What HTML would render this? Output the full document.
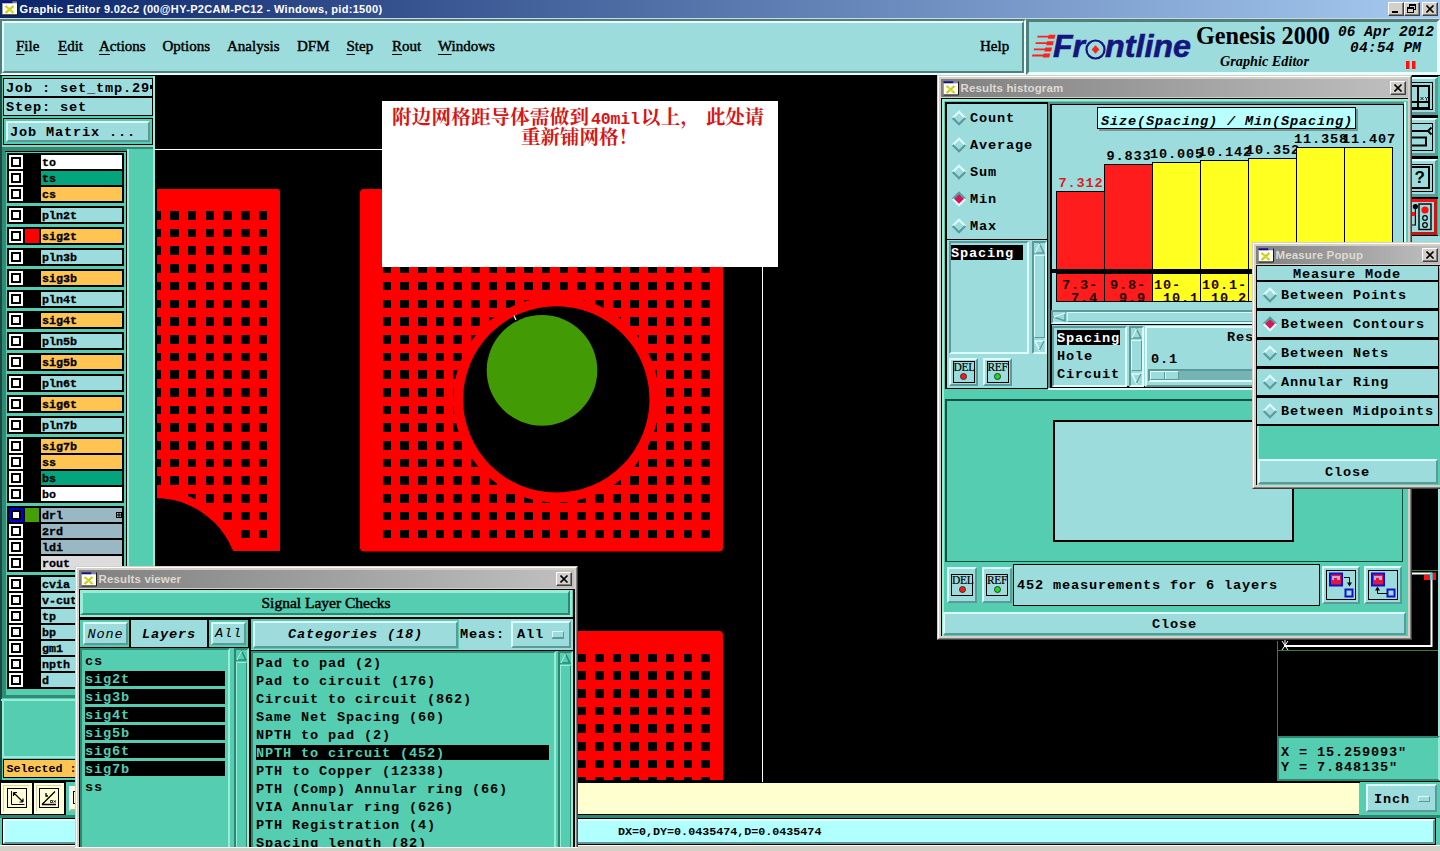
<!DOCTYPE html>
<html><head><meta charset="utf-8"><title>Graphic Editor</title>
<style>
html,body{margin:0;padding:0;width:1440px;height:851px;overflow:hidden}
body{width:1440px;height:851px;overflow:hidden;position:relative;background:#55cdb0}
div,span,svg{position:absolute;box-sizing:border-box}
span{white-space:pre;color:#000;line-height:20px;height:20px}
.m{font:bold 13.6px/20px "Liberation Mono",monospace;letter-spacing:0.84px}
.mi{font:italic bold 13.6px/20px "Liberation Mono",monospace;letter-spacing:0.84px}
.mn{font:italic 13.6px/20px "Liberation Mono",monospace;letter-spacing:0.84px}
.s{font:15px/20px "Liberation Serif",serif;-webkit-text-stroke:0.45px #000}
.sb{font:bold 15px/20px "Liberation Serif",serif;letter-spacing:0.5px}
.t{font:bold 11px/20px "Liberation Sans",sans-serif}
u{text-underline-offset:2.5px;text-decoration-thickness:1px}
.lc{background:#9ddcdc}
.aq{background:#55cdb0}
.ro{border:2px solid;border-color:#dcfbfb #5c9a9a #5c9a9a #dcfbfb;background:#9ddcdc}
.ri{border:2px solid;border-color:#5c9a9a #dcfbfb #dcfbfb #5c9a9a;background:#9ddcdc}
.ao{border:2px solid;border-color:#98ecd8 #2c8670 #2c8670 #98ecd8;background:#55cdb0}
.ai{border:2px solid;border-color:#2c8670 #98ecd8 #98ecd8 #2c8670;background:#55cdb0}
.bk{border:1px solid #000}
.cb{width:14px;height:14px;background:#fff;border:2px solid #fff}
.cb i{position:absolute;left:0;top:0;width:10px;height:10px;border:2px solid #000;background:#fff;box-sizing:border-box}
.win{background:#d4d0c8;border:1px solid;border-color:#d4d0c8 #404040 #404040 #d4d0c8}
.win>.w2{left:0;top:0;right:0;bottom:0;border:1px solid;border-color:#fff #808080 #808080 #fff}
.tb{background:linear-gradient(90deg,#808080,#c0c0c0);height:18px}
.xb{width:16px;height:14px;background:#d4d0c8;border:1px solid;border-color:#fff #404040 #404040 #fff;box-shadow:inset -1px -1px 0 #808080}
</style></head>
<body>
<div id="r" style="left:0;top:0;width:1440px;height:851px;overflow:hidden">
<div style="left:0px;top:0px;width:1440px;height:18px;background:linear-gradient(90deg,#0a246a,#a6caf0)"></div>
<div style="left:0px;top:18px;width:1440px;height:1px;background:#d0d6de"></div>
<svg style="left:2px;top:0px" width="17" height="16" viewBox="0 0 17 16"><rect x="1" y="3" width="14" height="11.500" fill="#fffff4"/><rect x="0.500" y="1.300" width="10" height="2" fill="#10108a"/><rect x="10.500" y="1.300" width="4.500" height="2" fill="#7880a8"/><path d="M15.500 1.500V15H0.500" stroke="#181818" fill="none"/><path d="M0.500 3V14.500" stroke="#a0a0a0" fill="none"/><path d="M3.500 6L11.500 13M11.500 6L3.500 13" stroke="#c8cc18" stroke-width="2.200"/><path d="M4.500 7.500L10 12" stroke="#eef040" stroke-width="0.800"/></svg>
<span class="t" style="left:19.5px;top:-1.03px;color:#fff;letter-spacing:0.33px">Graphic Editor 9.02c2 (00@HY-P2CAM-PC12 - Windows, pid:1500)</span>
<div class="xb" style="left:1388px;top:2px;width:16px;height:14px;"><div style="left:3px;top:8px;width:6px;height:2px;background:#000"></div></div>
<div class="xb" style="left:1404px;top:2px;width:16px;height:14px;"><div style="left:4px;top:1px;width:7px;height:6px;border:1px solid #000;border-top-width:2px"></div><div style="left:2px;top:4px;width:7px;height:6px;border:1px solid #000;border-top-width:2px;background:#d4d0c8"></div></div>
<div class="xb" style="left:1422px;top:2px;width:16px;height:14px;"><svg style="left:3px;top:2px" width="9" height="8"><path d="M0.5 0.5L7.5 7.5M7.5 0.5L0.5 7.5" stroke="#000" stroke-width="1.6"/></svg></div>
<div style="left:0px;top:19px;width:1026px;height:56px;border:2px solid;border-color:#4f807c #e8fffd #e8fffd #4f807c;background:#9ddcdc"><div style="left:0;top:0;right:0;bottom:0;border:2px solid;border-color:#e8fffd #4f807c #4f807c #e8fffd"></div></div>
<span class="s" style="left:16px;top:35.85px;"><u>F</u>ile</span>
<span class="s" style="left:58px;top:35.85px;"><u>E</u>dit</span>
<span class="s" style="left:99px;top:35.85px;"><u>A</u>ctions</span>
<span class="s" style="left:162.5px;top:35.85px;">Options</span>
<span class="s" style="left:227px;top:35.85px;">Analysis</span>
<span class="s" style="left:297px;top:35.85px;">DFM</span>
<span class="s" style="left:346.5px;top:35.85px;"><u>S</u>tep</span>
<span class="s" style="left:392px;top:35.85px;"><u>R</u>out</span>
<span class="s" style="left:438px;top:35.85px;"><u>W</u>indows</span>
<span class="s" style="left:980px;top:35.85px;">Help</span>
<div style="left:1026px;top:19px;width:414px;height:56px;border:3px solid;border-color:#4f807c #e8fffd #e8fffd #4f807c;background:#9ddcdc"></div>
<svg style="left:1026px;top:17px" width="414" height="58" viewBox="1026 17 414 58">
<g fill="#ff2020"><path d="M1037.500 35.800h11l.4-1h6.600l-1 4h-6.600l.3-1.200h-11z"/><path d="M1035.800 42.200h11l.4-1h6.600l-1 4h-6.600l.3-1.200h-11z"/><path d="M1034 48.400h11l.4-1h6.600l-1 4h-6.600l.3-1.200h-11z"/><path d="M1032.300 54.600h11l.4-1h6.600l-1 4h-6.600l.3-1.200h-11z"/></g>
<g font-family="Liberation Sans" font-weight="bold" font-style="italic" font-size="31" fill="#15157f" stroke="#15157f" stroke-width="0.6">
<text x="1053" y="57" textLength="32" lengthAdjust="spacingAndGlyphs">Fr</text>
<text x="1105" y="57" textLength="86" lengthAdjust="spacingAndGlyphs">ntline</text></g>
<circle cx="1095.5" cy="49.5" r="9" fill="none" stroke="#15157f" stroke-width="2.2"/>
<path d="M1095.5 45.2l3.8 4.3-3.8 4.3-3.8-4.3z" fill="#ff2020"/>
<text x="1196" y="44" font-family="Liberation Serif" font-size="26" font-weight="bold" textLength="134" lengthAdjust="spacingAndGlyphs" fill="#000">Genesis 2000</text>
<text x="1220" y="66" font-family="Liberation Serif" font-weight="bold" font-style="italic" font-size="14" textLength="89" lengthAdjust="spacingAndGlyphs" fill="#000">Graphic Editor</text>
<g font-family="Liberation Mono" font-weight="bold" font-style="italic" font-size="14.5" fill="#000">
<text x="1338" y="36" textLength="96" lengthAdjust="spacing">06 Apr 2012</text>
<text x="1350" y="52" textLength="71" lengthAdjust="spacing">04:54 PM</text></g>
<rect x="1406" y="61" width="3.5" height="8" fill="#ff1010"/><rect x="1412" y="61" width="3.5" height="8" fill="#ff1010"/>
</svg>
<div style="left:0px;top:75px;width:1440px;height:1px;background:#000"></div>
<div style="left:0px;top:76px;width:155px;height:706px;background:#55cdb0;border-left:2px solid #1c4a40"></div>
<div style="left:3px;top:78px;width:150px;height:19px;border:1px solid #000;background:#9ddcdc"></div>
<div style="left:3px;top:96px;width:150px;height:20px;border:1px solid #000;border-top-width:2px;background:#9ddcdc"></div>
<span class="m" style="left:6px;top:79.16px;">Job : set_tmp.29</span>
<div style="left:150px;top:85px;width:2px;height:4px;background:#000"></div>
<span class="m" style="left:6px;top:98.16px;">Step: set</span>
<div style="left:3px;top:118px;width:150px;height:27px;border:1px solid #000;background:#55cdb0"></div>
<div class="ro" style="left:6px;top:121px;width:144px;height:21px;"></div>
<span class="m" style="left:10px;top:123.16px;">Job Matrix ...</span>
<div style="left:2px;top:145px;width:151px;height:2px;background:#84d8c6"></div>
<div style="left:2px;top:147px;width:151px;height:4px;background:#2f8b76"></div>
<div style="left:2px;top:151px;width:125px;height:547px;background:#55cdb0;border:solid #2f8b76;border-width:0 0 3px 4px"></div>
<div style="left:5px;top:151px;width:122px;height:1px;background:#000"></div>
<div style="left:126px;top:151px;width:1px;height:547px;background:#000"></div>
<div style="left:127px;top:149px;width:28px;height:633px;background:#55cdb0;border:solid #98ecd8;border-width:0 2px 0 2px"></div>
<div style="left:153px;top:76px;width:2px;height:706px;background:#98ecd8"></div>
<div style="left:7px;top:153px;width:117px;height:50px;background:#000"></div>
<div class="cb" style="left:9px;top:155px;width:14px;height:14px;background:#fff;border-color:#fff"><i></i></div>
<div style="left:41px;top:155px;width:81px;height:14px;background:#fff"></div>
<span class="m" style="left:42px;top:152.74px;font-size:11.7px;letter-spacing:0;-webkit-text-stroke:0.3px #000">to</span>
<div class="cb" style="left:9px;top:171px;width:14px;height:14px;background:#fff;border-color:#fff"><i></i></div>
<div style="left:41px;top:171px;width:81px;height:14px;background:#04a47c"></div>
<span class="m" style="left:42px;top:168.74px;font-size:11.7px;letter-spacing:0;-webkit-text-stroke:0.3px #000">ts</span>
<div class="cb" style="left:9px;top:187px;width:14px;height:14px;background:#fff;border-color:#fff"><i></i></div>
<div style="left:41px;top:187px;width:81px;height:14px;background:#ffc452"></div>
<span class="m" style="left:42px;top:184.74px;font-size:11.7px;letter-spacing:0;-webkit-text-stroke:0.3px #000">cs</span>
<div style="left:7px;top:206px;width:117px;height:18px;background:#000"></div>
<div class="cb" style="left:9px;top:208px;width:14px;height:14px;background:#fff;border-color:#fff"><i></i></div>
<div style="left:41px;top:208px;width:81px;height:14px;background:#9ddcdc"></div>
<span class="m" style="left:42px;top:205.74px;font-size:11.7px;letter-spacing:0;-webkit-text-stroke:0.3px #000">pln2t</span>
<div style="left:7px;top:227px;width:117px;height:18px;background:#000"></div>
<div class="cb" style="left:9px;top:229px;width:14px;height:14px;background:#fff;border-color:#fff"><i></i></div>
<div style="left:25px;top:229px;width:14px;height:14px;background:#ff0000"></div>
<div style="left:41px;top:229px;width:81px;height:14px;background:#ffc452"></div>
<span class="m" style="left:42px;top:226.74px;font-size:11.7px;letter-spacing:0;-webkit-text-stroke:0.3px #000">sig2t</span>
<div style="left:7px;top:248px;width:117px;height:18px;background:#000"></div>
<div class="cb" style="left:9px;top:250px;width:14px;height:14px;background:#fff;border-color:#fff"><i></i></div>
<div style="left:41px;top:250px;width:81px;height:14px;background:#9ddcdc"></div>
<span class="m" style="left:42px;top:247.74px;font-size:11.7px;letter-spacing:0;-webkit-text-stroke:0.3px #000">pln3b</span>
<div style="left:7px;top:269px;width:117px;height:18px;background:#000"></div>
<div class="cb" style="left:9px;top:271px;width:14px;height:14px;background:#fff;border-color:#fff"><i></i></div>
<div style="left:41px;top:271px;width:81px;height:14px;background:#ffc452"></div>
<span class="m" style="left:42px;top:268.74px;font-size:11.7px;letter-spacing:0;-webkit-text-stroke:0.3px #000">sig3b</span>
<div style="left:7px;top:290px;width:117px;height:18px;background:#000"></div>
<div class="cb" style="left:9px;top:292px;width:14px;height:14px;background:#fff;border-color:#fff"><i></i></div>
<div style="left:41px;top:292px;width:81px;height:14px;background:#9ddcdc"></div>
<span class="m" style="left:42px;top:289.74px;font-size:11.7px;letter-spacing:0;-webkit-text-stroke:0.3px #000">pln4t</span>
<div style="left:7px;top:311px;width:117px;height:18px;background:#000"></div>
<div class="cb" style="left:9px;top:313px;width:14px;height:14px;background:#fff;border-color:#fff"><i></i></div>
<div style="left:41px;top:313px;width:81px;height:14px;background:#ffc452"></div>
<span class="m" style="left:42px;top:310.74px;font-size:11.7px;letter-spacing:0;-webkit-text-stroke:0.3px #000">sig4t</span>
<div style="left:7px;top:332px;width:117px;height:18px;background:#000"></div>
<div class="cb" style="left:9px;top:334px;width:14px;height:14px;background:#fff;border-color:#fff"><i></i></div>
<div style="left:41px;top:334px;width:81px;height:14px;background:#9ddcdc"></div>
<span class="m" style="left:42px;top:331.74px;font-size:11.7px;letter-spacing:0;-webkit-text-stroke:0.3px #000">pln5b</span>
<div style="left:7px;top:353px;width:117px;height:18px;background:#000"></div>
<div class="cb" style="left:9px;top:355px;width:14px;height:14px;background:#fff;border-color:#fff"><i></i></div>
<div style="left:41px;top:355px;width:81px;height:14px;background:#ffc452"></div>
<span class="m" style="left:42px;top:352.74px;font-size:11.7px;letter-spacing:0;-webkit-text-stroke:0.3px #000">sig5b</span>
<div style="left:7px;top:374px;width:117px;height:18px;background:#000"></div>
<div class="cb" style="left:9px;top:376px;width:14px;height:14px;background:#fff;border-color:#fff"><i></i></div>
<div style="left:41px;top:376px;width:81px;height:14px;background:#9ddcdc"></div>
<span class="m" style="left:42px;top:373.74px;font-size:11.7px;letter-spacing:0;-webkit-text-stroke:0.3px #000">pln6t</span>
<div style="left:7px;top:395px;width:117px;height:18px;background:#000"></div>
<div class="cb" style="left:9px;top:397px;width:14px;height:14px;background:#fff;border-color:#fff"><i></i></div>
<div style="left:41px;top:397px;width:81px;height:14px;background:#ffc452"></div>
<span class="m" style="left:42px;top:394.74px;font-size:11.7px;letter-spacing:0;-webkit-text-stroke:0.3px #000">sig6t</span>
<div style="left:7px;top:416px;width:117px;height:18px;background:#000"></div>
<div class="cb" style="left:9px;top:418px;width:14px;height:14px;background:#fff;border-color:#fff"><i></i></div>
<div style="left:41px;top:418px;width:81px;height:14px;background:#9ddcdc"></div>
<span class="m" style="left:42px;top:415.74px;font-size:11.7px;letter-spacing:0;-webkit-text-stroke:0.3px #000">pln7b</span>
<div style="left:7px;top:437px;width:117px;height:66px;background:#000"></div>
<div class="cb" style="left:9px;top:439px;width:14px;height:14px;background:#fff;border-color:#fff"><i></i></div>
<div style="left:41px;top:439px;width:81px;height:14px;background:#ffc452"></div>
<span class="m" style="left:42px;top:436.74px;font-size:11.7px;letter-spacing:0;-webkit-text-stroke:0.3px #000">sig7b</span>
<div class="cb" style="left:9px;top:455px;width:14px;height:14px;background:#fff;border-color:#fff"><i></i></div>
<div style="left:41px;top:455px;width:81px;height:14px;background:#ffc452"></div>
<span class="m" style="left:42px;top:452.74px;font-size:11.7px;letter-spacing:0;-webkit-text-stroke:0.3px #000">ss</span>
<div class="cb" style="left:9px;top:471px;width:14px;height:14px;background:#fff;border-color:#fff"><i></i></div>
<div style="left:41px;top:471px;width:81px;height:14px;background:#04a47c"></div>
<span class="m" style="left:42px;top:468.74px;font-size:11.7px;letter-spacing:0;-webkit-text-stroke:0.3px #000">bs</span>
<div class="cb" style="left:9px;top:487px;width:14px;height:14px;background:#fff;border-color:#fff"><i></i></div>
<div style="left:41px;top:487px;width:81px;height:14px;background:#fff"></div>
<span class="m" style="left:42px;top:484.74px;font-size:11.7px;letter-spacing:0;-webkit-text-stroke:0.3px #000">bo</span>
<div style="left:7px;top:506px;width:117px;height:66px;background:#000"></div>
<div class="cb" style="left:9px;top:508px;width:14px;height:14px;background:#0000d8;border-color:#0000d8"><i></i></div>
<div style="left:25px;top:508px;width:14px;height:14px;background:#45a008"></div>
<div style="left:41px;top:508px;width:81px;height:14px;background:#9ab8c4"></div>
<span class="m" style="left:42px;top:505.74px;font-size:11.7px;letter-spacing:0;-webkit-text-stroke:0.3px #000">drl</span>
<div class="cb" style="left:9px;top:524px;width:14px;height:14px;background:#fff;border-color:#fff"><i></i></div>
<div style="left:41px;top:524px;width:81px;height:14px;background:#9ab8c4"></div>
<span class="m" style="left:42px;top:521.74px;font-size:11.7px;letter-spacing:0;-webkit-text-stroke:0.3px #000">2rd</span>
<div class="cb" style="left:9px;top:540px;width:14px;height:14px;background:#fff;border-color:#fff"><i></i></div>
<div style="left:41px;top:540px;width:81px;height:14px;background:#9ab8c4"></div>
<span class="m" style="left:42px;top:537.74px;font-size:11.7px;letter-spacing:0;-webkit-text-stroke:0.3px #000">ldi</span>
<div class="cb" style="left:9px;top:556px;width:14px;height:14px;background:#fff;border-color:#fff"><i></i></div>
<div style="left:41px;top:556px;width:81px;height:14px;background:#dcdcdc"></div>
<span class="m" style="left:42px;top:553.74px;font-size:11.7px;letter-spacing:0;-webkit-text-stroke:0.3px #000">rout</span>
<div style="left:7px;top:575px;width:117px;height:114px;background:#000"></div>
<div class="cb" style="left:9px;top:577px;width:14px;height:14px;background:#fff;border-color:#fff"><i></i></div>
<div style="left:41px;top:577px;width:81px;height:14px;background:#9ddcdc"></div>
<span class="m" style="left:42px;top:574.74px;font-size:11.7px;letter-spacing:0;-webkit-text-stroke:0.3px #000">cvia</span>
<div class="cb" style="left:9px;top:593px;width:14px;height:14px;background:#fff;border-color:#fff"><i></i></div>
<div style="left:41px;top:593px;width:81px;height:14px;background:#9ddcdc"></div>
<span class="m" style="left:42px;top:590.74px;font-size:11.7px;letter-spacing:0;-webkit-text-stroke:0.3px #000">v-cut</span>
<div class="cb" style="left:9px;top:609px;width:14px;height:14px;background:#fff;border-color:#fff"><i></i></div>
<div style="left:41px;top:609px;width:81px;height:14px;background:#9ddcdc"></div>
<span class="m" style="left:42px;top:606.74px;font-size:11.7px;letter-spacing:0;-webkit-text-stroke:0.3px #000">tp</span>
<div class="cb" style="left:9px;top:625px;width:14px;height:14px;background:#fff;border-color:#fff"><i></i></div>
<div style="left:41px;top:625px;width:81px;height:14px;background:#9ddcdc"></div>
<span class="m" style="left:42px;top:622.74px;font-size:11.7px;letter-spacing:0;-webkit-text-stroke:0.3px #000">bp</span>
<div class="cb" style="left:9px;top:641px;width:14px;height:14px;background:#fff;border-color:#fff"><i></i></div>
<div style="left:41px;top:641px;width:81px;height:14px;background:#9ddcdc"></div>
<span class="m" style="left:42px;top:638.74px;font-size:11.7px;letter-spacing:0;-webkit-text-stroke:0.3px #000">gm1</span>
<div class="cb" style="left:9px;top:657px;width:14px;height:14px;background:#fff;border-color:#fff"><i></i></div>
<div style="left:41px;top:657px;width:81px;height:14px;background:#9ddcdc"></div>
<span class="m" style="left:42px;top:654.74px;font-size:11.7px;letter-spacing:0;-webkit-text-stroke:0.3px #000">npth</span>
<div class="cb" style="left:9px;top:673px;width:14px;height:14px;background:#fff;border-color:#fff"><i></i></div>
<div style="left:41px;top:673px;width:81px;height:14px;background:#9ddcdc"></div>
<span class="m" style="left:42px;top:670.74px;font-size:11.7px;letter-spacing:0;-webkit-text-stroke:0.3px #000">d</span>
<svg style="left:116px;top:512px" width="6" height="6"><rect x="0.5" y="0.5" width="5" height="5" fill="none" stroke="#000"/><path d="M3 0v6M0 3h6" stroke="#000"/></svg>
<div style="left:1px;top:699px;width:127px;height:2px;background:#98ecd8"></div>
<div style="left:2px;top:756px;width:152px;height:2px;background:#98ecd8"></div>
<div style="left:3px;top:759px;width:151px;height:19px;background:#ffc452;border:1px solid #000"></div>
<div style="left:0px;top:780px;width:155px;height:2px;background:#000"></div>
<div style="left:2px;top:701px;width:2px;height:56px;background:#98ecd8"></div>
<span class="m" style="left:6.5px;top:758.74px;font-size:11.7px;letter-spacing:0">Selected :</span>
<svg style="left:155px;top:76px" width="1285" height="706" viewBox="155 76 1285 706">
<defs>
<mask id="m1"><rect x="155" y="76" width="1285" height="706" fill="#fff"/><circle cx="155" cy="582" r="92" fill="#000"/><circle cx="556.3" cy="399.4" r="103" fill="#000"/></mask>
</defs>
<rect x="155" y="76" width="1285" height="706" fill="#000"/>
<path d="M155 149.5H762.5V782" fill="none" stroke="#fff" stroke-width="1"/>
<g fill="#ff0000">
<path d="M157 189H277a3 3 0 0 1 3 3V551H157z"/>
<rect x="360" y="189" width="363" height="362.5" rx="4"/>
<path d="M360 631H719a4 4 0 0 1 4 4V780H360z"/>
</g>
<circle cx="155" cy="582" r="84" fill="#000"/>
<g mask="url(#m1)"><path fill="#000" shape-rendering="crispEdges" d="M157 211h4v9h-4zM170 211h9v9h-9zM188 211h8v9h-8zM206 211h8v9h-8zM223 211h9v9h-9zM241 211h9v9h-9zM259 211h8v9h-8zM157 229h4v8h-4zM170 229h9v8h-9zM188 229h8v8h-8zM206 229h8v8h-8zM223 229h9v8h-9zM241 229h9v8h-9zM259 229h8v8h-8zM157 246h4v9h-4zM170 246h9v9h-9zM188 246h8v9h-8zM206 246h8v9h-8zM223 246h9v9h-9zM241 246h9v9h-9zM259 246h8v9h-8zM157 264h4v9h-4zM170 264h9v9h-9zM188 264h8v9h-8zM206 264h8v9h-8zM223 264h9v9h-9zM241 264h9v9h-9zM259 264h8v9h-8zM157 282h4v8h-4zM170 282h9v8h-9zM188 282h8v8h-8zM206 282h8v8h-8zM223 282h9v8h-9zM241 282h9v8h-9zM259 282h8v8h-8zM157 300h4v8h-4zM170 300h9v8h-9zM188 300h8v8h-8zM206 300h8v8h-8zM223 300h9v8h-9zM241 300h9v8h-9zM259 300h8v8h-8zM157 317h4v9h-4zM170 317h9v9h-9zM188 317h8v9h-8zM206 317h8v9h-8zM223 317h9v9h-9zM241 317h9v9h-9zM259 317h8v9h-8zM157 335h4v9h-4zM170 335h9v9h-9zM188 335h8v9h-8zM206 335h8v9h-8zM223 335h9v9h-9zM241 335h9v9h-9zM259 335h8v9h-8zM157 353h4v8h-4zM170 353h9v8h-9zM188 353h8v8h-8zM206 353h8v8h-8zM223 353h9v8h-9zM241 353h9v8h-9zM259 353h8v8h-8zM157 370h4v9h-4zM170 370h9v9h-9zM188 370h8v9h-8zM206 370h8v9h-8zM223 370h9v9h-9zM241 370h9v9h-9zM259 370h8v9h-8zM157 388h4v9h-4zM170 388h9v9h-9zM188 388h8v9h-8zM206 388h8v9h-8zM223 388h9v9h-9zM241 388h9v9h-9zM259 388h8v9h-8zM157 406h4v8h-4zM170 406h9v8h-9zM188 406h8v8h-8zM206 406h8v8h-8zM223 406h9v8h-9zM241 406h9v8h-9zM259 406h8v8h-8zM157 423h4v9h-4zM170 423h9v9h-9zM188 423h8v9h-8zM206 423h8v9h-8zM223 423h9v9h-9zM241 423h9v9h-9zM259 423h8v9h-8zM157 441h4v9h-4zM170 441h9v9h-9zM188 441h8v9h-8zM206 441h8v9h-8zM223 441h9v9h-9zM241 441h9v9h-9zM259 441h8v9h-8zM157 459h4v8h-4zM170 459h9v8h-9zM188 459h8v8h-8zM206 459h8v8h-8zM223 459h9v8h-9zM241 459h9v8h-9zM259 459h8v8h-8zM157 476h4v9h-4zM170 476h9v9h-9zM188 476h8v9h-8zM206 476h8v9h-8zM223 476h9v9h-9zM241 476h9v9h-9zM259 476h8v9h-8zM188 494h8v9h-8zM206 494h8v9h-8zM223 494h9v9h-9zM241 494h9v9h-9zM259 494h8v9h-8zM223 512h9v8h-9zM241 512h9v8h-9zM259 512h8v8h-8zM223 530h9v8h-9zM241 530h9v8h-9zM259 530h8v8h-8zM383 264h8v9h-8zM400 264h9v9h-9zM418 264h9v9h-9zM436 264h8v9h-8zM453 264h9v9h-9zM471 264h9v9h-9zM489 264h8v9h-8zM506 264h9v9h-9zM524 264h9v9h-9zM542 264h8v9h-8zM560 264h8v9h-8zM577 264h9v9h-9zM595 264h9v9h-9zM613 264h8v9h-8zM630 264h9v9h-9zM648 264h9v9h-9zM666 264h8v9h-8zM684 264h8v9h-8zM701 264h9v9h-9zM383 282h8v8h-8zM400 282h9v8h-9zM418 282h9v8h-9zM436 282h8v8h-8zM453 282h9v8h-9zM471 282h9v8h-9zM489 282h8v8h-8zM506 282h9v8h-9zM524 282h9v8h-9zM542 282h8v8h-8zM560 282h8v8h-8zM577 282h9v8h-9zM595 282h9v8h-9zM613 282h8v8h-8zM630 282h9v8h-9zM648 282h9v8h-9zM666 282h8v8h-8zM684 282h8v8h-8zM701 282h9v8h-9zM383 300h8v8h-8zM400 300h9v8h-9zM418 300h9v8h-9zM436 300h8v8h-8zM453 300h9v8h-9zM471 300h9v8h-9zM489 300h8v8h-8zM506 300h9v8h-9zM524 300h9v8h-9zM577 300h9v8h-9zM595 300h9v8h-9zM613 300h8v8h-8zM630 300h9v8h-9zM648 300h9v8h-9zM666 300h8v8h-8zM684 300h8v8h-8zM701 300h9v8h-9zM383 317h8v9h-8zM400 317h9v9h-9zM418 317h9v9h-9zM436 317h8v9h-8zM453 317h9v9h-9zM471 317h9v9h-9zM489 317h8v9h-8zM613 317h8v9h-8zM630 317h9v9h-9zM648 317h9v9h-9zM666 317h8v9h-8zM684 317h8v9h-8zM701 317h9v9h-9zM383 335h8v9h-8zM400 335h9v9h-9zM418 335h9v9h-9zM436 335h8v9h-8zM453 335h9v9h-9zM471 335h9v9h-9zM630 335h9v9h-9zM648 335h9v9h-9zM666 335h8v9h-8zM684 335h8v9h-8zM701 335h9v9h-9zM383 353h8v8h-8zM400 353h9v8h-9zM418 353h9v8h-9zM436 353h8v8h-8zM453 353h9v8h-9zM648 353h9v8h-9zM666 353h8v8h-8zM684 353h8v8h-8zM701 353h9v8h-9zM383 370h8v9h-8zM400 370h9v9h-9zM418 370h9v9h-9zM436 370h8v9h-8zM453 370h9v9h-9zM648 370h9v9h-9zM666 370h8v9h-8zM684 370h8v9h-8zM701 370h9v9h-9zM383 388h8v9h-8zM400 388h9v9h-9zM418 388h9v9h-9zM436 388h8v9h-8zM453 388h9v9h-9zM666 388h8v9h-8zM684 388h8v9h-8zM701 388h9v9h-9zM383 406h8v8h-8zM400 406h9v8h-9zM418 406h9v8h-9zM436 406h8v8h-8zM453 406h9v8h-9zM666 406h8v8h-8zM684 406h8v8h-8zM701 406h9v8h-9zM383 423h8v9h-8zM400 423h9v9h-9zM418 423h9v9h-9zM436 423h8v9h-8zM453 423h9v9h-9zM648 423h9v9h-9zM666 423h8v9h-8zM684 423h8v9h-8zM701 423h9v9h-9zM383 441h8v9h-8zM400 441h9v9h-9zM418 441h9v9h-9zM436 441h8v9h-8zM453 441h9v9h-9zM648 441h9v9h-9zM666 441h8v9h-8zM684 441h8v9h-8zM701 441h9v9h-9zM383 459h8v8h-8zM400 459h9v8h-9zM418 459h9v8h-9zM436 459h8v8h-8zM453 459h9v8h-9zM471 459h9v8h-9zM630 459h9v8h-9zM648 459h9v8h-9zM666 459h8v8h-8zM684 459h8v8h-8zM701 459h9v8h-9zM383 476h8v9h-8zM400 476h9v9h-9zM418 476h9v9h-9zM436 476h8v9h-8zM453 476h9v9h-9zM471 476h9v9h-9zM489 476h8v9h-8zM613 476h8v9h-8zM630 476h9v9h-9zM648 476h9v9h-9zM666 476h8v9h-8zM684 476h8v9h-8zM701 476h9v9h-9zM383 494h8v9h-8zM400 494h9v9h-9zM418 494h9v9h-9zM436 494h8v9h-8zM453 494h9v9h-9zM471 494h9v9h-9zM489 494h8v9h-8zM506 494h9v9h-9zM524 494h9v9h-9zM542 494h8v9h-8zM560 494h8v9h-8zM577 494h9v9h-9zM595 494h9v9h-9zM613 494h8v9h-8zM630 494h9v9h-9zM648 494h9v9h-9zM666 494h8v9h-8zM684 494h8v9h-8zM701 494h9v9h-9zM383 512h8v8h-8zM400 512h9v8h-9zM418 512h9v8h-9zM436 512h8v8h-8zM453 512h9v8h-9zM471 512h9v8h-9zM489 512h8v8h-8zM506 512h9v8h-9zM524 512h9v8h-9zM542 512h8v8h-8zM560 512h8v8h-8zM577 512h9v8h-9zM595 512h9v8h-9zM613 512h8v8h-8zM630 512h9v8h-9zM648 512h9v8h-9zM666 512h8v8h-8zM684 512h8v8h-8zM701 512h9v8h-9zM383 530h8v8h-8zM400 530h9v8h-9zM418 530h9v8h-9zM436 530h8v8h-8zM453 530h9v8h-9zM471 530h9v8h-9zM489 530h8v8h-8zM506 530h9v8h-9zM524 530h9v8h-9zM542 530h8v8h-8zM560 530h8v8h-8zM577 530h9v8h-9zM595 530h9v8h-9zM613 530h8v8h-8zM630 530h9v8h-9zM648 530h9v8h-9zM666 530h8v8h-8zM684 530h8v8h-8zM701 530h9v8h-9zM578 654h8v8h-8zM595 654h9v8h-9zM613 654h8v8h-8zM630 654h9v8h-9zM648 654h9v8h-9zM666 654h8v8h-8zM684 654h8v8h-8zM701 654h9v8h-9zM578 671h8v9h-8zM595 671h9v9h-9zM613 671h8v9h-8zM630 671h9v9h-9zM648 671h9v9h-9zM666 671h8v9h-8zM684 671h8v9h-8zM701 671h9v9h-9zM578 689h8v9h-8zM595 689h9v9h-9zM613 689h8v9h-8zM630 689h9v9h-9zM648 689h9v9h-9zM666 689h8v9h-8zM684 689h8v9h-8zM701 689h9v9h-9zM578 707h8v8h-8zM595 707h9v8h-9zM613 707h8v8h-8zM630 707h9v8h-9zM648 707h9v8h-9zM666 707h8v8h-8zM684 707h8v8h-8zM701 707h9v8h-9zM578 724h8v9h-8zM595 724h9v9h-9zM613 724h8v9h-8zM630 724h9v9h-9zM648 724h9v9h-9zM666 724h8v9h-8zM684 724h8v9h-8zM701 724h9v9h-9zM578 742h8v9h-8zM595 742h9v9h-9zM613 742h8v9h-8zM630 742h9v9h-9zM648 742h9v9h-9zM666 742h8v9h-8zM684 742h8v9h-8zM701 742h9v9h-9zM578 760h8v8h-8zM595 760h9v8h-9zM613 760h8v8h-8zM630 760h9v8h-9zM648 760h9v8h-9zM666 760h8v8h-8zM684 760h8v8h-8zM701 760h9v8h-9zM578 777h8v3h-8zM595 777h9v3h-9zM613 777h8v3h-8zM630 777h9v3h-9zM648 777h9v3h-9zM666 777h8v3h-8zM684 777h8v3h-8zM701 777h9v3h-9z"/></g>
<circle cx="556.3" cy="399.4" r="93.2" fill="#000"/>
<circle cx="542" cy="370.4" r="55.3" fill="#429a04"/>
<path d="M514 315.5l2 4.5" stroke="#fff" stroke-width="1.2"/>
</svg>
<div style="left:382px;top:101px;width:396px;height:166px;background:#fff"></div>
<svg style="left:382px;top:101px" width="396" height="60" viewBox="382 101 396 60"><g font-family="'Liberation Serif','Noto Serif CJK SC',serif" font-weight="bold" font-size="19.5" fill="#d81414"><text x="392" y="124" textLength="197" lengthAdjust="spacing">附边网格距导体需做到</text><text x="641" y="124" textLength="59" lengthAdjust="spacing">以上，</text><text x="706" y="124" textLength="58" lengthAdjust="spacing">此处请</text><text x="521" y="143.500" textLength="117" lengthAdjust="spacing">重新铺网格！</text></g><text x="591" y="124" font-family="Liberation Mono" font-weight="bold" font-size="16.6" fill="#d81414" textLength="49" lengthAdjust="spacing">40mil</text></svg>
<div style="left:0px;top:782px;width:1440px;height:69px;background:#55cdb0"></div>
<div style="left:155px;top:782px;width:1205px;height:1px;background:#000"></div>
<div style="left:70px;top:783px;width:1289px;height:32px;background:#ffffd0;border-bottom:1px solid #000"></div>
<div style="left:0px;top:782px;width:68px;height:34px;background:#000"></div>
<div style="left:1px;top:783px;width:31px;height:31px;background:#ffffd4;border:1px solid #fffff4"><div style="left:1px;top:1px;right:1px;bottom:1px;border:1px solid;border-color:#d4d4a4 #fffff4 #fffff4 #d4d4a4"></div><div style="left:5px;top:4px;width:20px;height:20px;border:1.500px solid #000"></div><svg style="left:6px;top:4px" width="20" height="20"><path d="M3.500 3v13.500h13" stroke="#000" fill="none" stroke-width="1"/><path d="M5.500 4.500L15 14M5.500 4.500h3.500M5.500 4.500v3.500M15 14h-3.500M15 14v-3.500" stroke="#000" fill="none" stroke-width="1.200"/></svg></div>
<div style="left:34px;top:783px;width:30px;height:31px;background:#ffffd4;border:1px solid #fffff4"><div style="left:1px;top:1px;right:1px;bottom:1px;border:1px solid;border-color:#d4d4a4 #fffff4 #fffff4 #d4d4a4"></div><div style="left:4px;top:4px;width:20px;height:20px;border:1.500px solid #000"></div><svg style="left:4px;top:4px" width="20" height="20"><path d="M3 16.500L16 3.500M3 16.500h14M7 5v3h2" stroke="#000" fill="none" stroke-width="1.300"/><path d="M11.500 12.500h2v2h-2zM14.500 12.500l2.500 2m0-2l-2.500 2" stroke="#000" fill="none" stroke-width="0.800"/></svg></div>
<div style="left:66px;top:782px;width:12px;height:33px;background:#55cdb0"></div>
<div style="left:69px;top:786px;width:12px;height:25px;background:#ffffd4;border:2px solid;border-color:#fffff4 #b4b48c #b4b48c #fffff4"><div style="left:2px;top:3px;width:8px;height:13px;border:1.500px solid #000"></div></div>
<div style="left:1360px;top:782px;width:80px;height:33px;background:#55cdb0"></div>
<div class="ro" style="left:1366px;top:784px;width:71px;height:28px;"></div>
<span class="m" style="left:1374px;top:790.16px;">Inch</span>
<div style="left:1418px;top:796px;width:12px;height:6px;border:1px solid;border-color:#dcfbfb #5c9a9a #5c9a9a #dcfbfb;background:#9ddcdc"></div>
<div style="left:0px;top:815px;width:1440px;height:3px;background:#2c8670"></div>
<div style="left:2px;top:818px;width:1434px;height:27px;background:#b2ffff;border:1px solid #000"><div style="left:0;top:0;right:0;bottom:0;border:2px solid;border-color:#dcffff #5c9a9a #5c9a9a #dcffff"></div></div>
<span class="m" style="left:618px;top:821.54px;font-size:11.7px;letter-spacing:0">DX=0,DY=0.0435474,D=0.0435474</span>
<div style="left:0px;top:845px;width:1440px;height:6px;background:#d4d0c8;border-top:1px solid #fff"></div>
<div style="left:1411px;top:76px;width:29px;height:166px;background:#000"></div>
<div style="left:1438px;top:76px;width:2px;height:166px;background:#55cdb0"></div>
<div style="left:1404px;top:77px;width:34px;height:38px;background:#9ddcdc;border:2px solid;border-color:#dcfbfb #5c9a9a #5c9a9a #dcfbfb;border-bottom-width:3px;border-right-width:3px"><div style="left:-2px;top:3px;right:2px;bottom:2px;border:1px solid #000"></div><div style="left:5px;top:-2px;width:40px;height:60px"><svg style="left:0;top:0" width="27" height="38"><path d="M-2 9h20v22h-22M7 9v22M-2 25h20" stroke="#000" stroke-width="2" fill="none"/><path d="M9.5 20l3 3m0-3l-3 3M14 20l1.5 1.5l1.5-1.5m-1.5 1.5v2" stroke="#000" stroke-width="0.8" fill="none"/></svg></div></div>
<div style="left:1404px;top:118px;width:34px;height:38px;background:#9ddcdc;border:2px solid;border-color:#dcfbfb #5c9a9a #5c9a9a #dcfbfb;border-bottom-width:3px;border-right-width:3px"><div style="left:-2px;top:3px;right:2px;bottom:2px;border:1px solid #000"></div><div style="left:5px;top:-2px;width:40px;height:60px"><svg style="left:0;top:0" width="27" height="38"><path d="M-2 13h19l3.5-3.5M17 13l3.5 3.5" stroke="#000" stroke-width="1.8" fill="none"/><path d="M-2 19.5h17v8h-19" stroke="#000" stroke-width="2" fill="none"/></svg></div></div>
<div style="left:1404px;top:159px;width:34px;height:38px;background:#9ddcdc;border:2px solid;border-color:#dcfbfb #5c9a9a #5c9a9a #dcfbfb;border-bottom-width:3px;border-right-width:3px"><div style="left:-2px;top:3px;right:2px;bottom:2px;border:1px solid #000"></div><div style="left:5px;top:-2px;width:40px;height:60px"><div style="left:-8px;top:7px;width:26.5px;height:23px;border:2px solid #000"></div><span class="t" style="left:3.5px;top:8.95px;font-size:17px;">?</span></div></div>
<div style="left:1404px;top:199px;width:32.5px;height:36px;background:#9ddcdc;border:3px solid;border-color:#ff1010 #c41818 #c41818 #ff1010"><div style="left:4px;top:-3px;width:40px;height:60px"><svg style="left:0;top:0" width="27" height="38"><rect x="8" y="5" width="12" height="25.5" fill="none" stroke="#000" stroke-width="1.4"/><circle cx="14" cy="11" r="3.6" fill="#ff1010"/><circle cx="14" cy="19" r="2.3" fill="#9ddcdc" stroke="#000" stroke-width="1.2"/><circle cx="14" cy="26" r="2.3" fill="#9ddcdc" stroke="#000" stroke-width="1.2"/><circle cx="4.4" cy="7.5" r="2.6" fill="#000"/><path d="M4.4 7v19h-5" stroke="#000" fill="none" stroke-width="1.2"/><rect x="1" y="13" width="3" height="4" fill="#ff1010"/></svg></div></div>
<div style="left:1436.5px;top:199px;width:1.5px;height:36px;background:#5c9a9a"></div>
<div style="left:1411px;top:236px;width:29px;height:6px;background:#9ddcdc"></div>
<svg style="left:1270px;top:560px" width="170" height="180" viewBox="1270 560 170 180">
<rect x="1278" y="641" width="162" height="96" fill="#000"/>
<path d="M1277.5 641V736M1278 650.5H1440" stroke="#3c7c3c" fill="none"/>
<path d="M1412 573.5H1431.5V646H1284" stroke="#fff" stroke-width="2" fill="none"/>
<path d="M1282 641l6 9M1288 641l-6 9M1285 640v6" stroke="#fff" stroke-width="1" fill="none"/>
<path d="M1412 570.500H1438" stroke="#3c7c3c" fill="none"/><rect x="1424" y="575" width="6" height="5" fill="#ff1010"/><rect x="1432.500" y="572.500" width="3.500" height="7.500" fill="#ff1010"/><rect x="1430" y="573" width="2.500" height="7" fill="#30e0f0"/>
</svg>
<div style="left:1438px;top:489px;width:2px;height:248px;background:#9ce4dc"></div>
<div style="left:1277px;top:736px;width:163px;height:45px;background:#55cdb0;border:2px solid;border-color:#2c8670 #98ecd8 #2c8670 #2c8670"></div>
<span class="m" style="left:1281px;top:743.16px;">X = 15.259093"</span>
<span class="m" style="left:1281px;top:758.16px;">Y = 7.848135"</span>
<div class="win" style="left:937px;top:75px;width:475px;height:565px;"><div class="w2"></div></div>
<div class="tb" style="left:941px;top:79px;width:467px;height:18px;"><svg style="left:2px;top:1px" width="17" height="16" viewBox="0 0 17 16"><rect x="1" y="3" width="14" height="11.500" fill="#fffff4"/><rect x="0.500" y="1.300" width="10" height="2" fill="#10108a"/><rect x="10.500" y="1.300" width="4.500" height="2" fill="#7880a8"/><path d="M15.500 1.500V15H0.500" stroke="#181818" fill="none"/><path d="M0.500 3V14.500" stroke="#a0a0a0" fill="none"/><path d="M3.500 6L11.500 13M11.500 6L3.500 13" stroke="#c8cc18" stroke-width="2.200"/><path d="M4.500 7.500L10 12" stroke="#eef040" stroke-width="0.800"/></svg><span class="t" style="left:19.5px;top:-0.83px;font-size:11.5px;color:#dedad2;letter-spacing:0.15px">Results histogram</span></div>
<div class="xb" style="left:1390px;top:81px;width:16px;height:14px;"><svg style="left:3px;top:2px" width="9" height="8"><path d="M0.5 0.5L7.5 7.5M7.5 0.5L0.5 7.5" stroke="#000" stroke-width="1.6"/></svg></div>
<div style="left:941px;top:98px;width:467px;height:538px;background:#55cdb0;border:solid #000;border-width:1px 0 0 1px;box-shadow:inset 2px 2px 0 #98ecd8"></div>
<div style="left:945px;top:102px;width:103px;height:138px;background:#9ddcdc;border:1px solid #000;border-width:2px 1px 1px 2px"></div>
<svg style="left:950.5px;top:109.5px" width="16" height="16" viewBox="-8 -8 16 16"><path d="M0 -6.3L6.3 0 0 6.3 -6.3 0z" fill="#9ddcdc"/><path d="M-6.3 0L0 -6.3 6.300 0" fill="none" stroke="#dcfbfb" stroke-width="2.2"/><path d="M-6.3 0L0 6.3 6.300 0" fill="none" stroke="#5c9a9a" stroke-width="2.2"/></svg>
<span class="m" style="left:970px;top:109.16px;">Count</span>
<svg style="left:950.5px;top:136.5px" width="16" height="16" viewBox="-8 -8 16 16"><path d="M0 -6.3L6.3 0 0 6.3 -6.3 0z" fill="#9ddcdc"/><path d="M-6.3 0L0 -6.3 6.300 0" fill="none" stroke="#dcfbfb" stroke-width="2.2"/><path d="M-6.3 0L0 6.3 6.300 0" fill="none" stroke="#5c9a9a" stroke-width="2.2"/></svg>
<span class="m" style="left:970px;top:136.16px;">Average</span>
<svg style="left:950.5px;top:163.5px" width="16" height="16" viewBox="-8 -8 16 16"><path d="M0 -6.3L6.3 0 0 6.3 -6.3 0z" fill="#9ddcdc"/><path d="M-6.3 0L0 -6.3 6.300 0" fill="none" stroke="#dcfbfb" stroke-width="2.2"/><path d="M-6.3 0L0 6.3 6.300 0" fill="none" stroke="#5c9a9a" stroke-width="2.2"/></svg>
<span class="m" style="left:970px;top:163.16px;">Sum</span>
<svg style="left:950.5px;top:190.5px" width="16" height="16" viewBox="-8 -8 16 16"><path d="M0 -6.3L6.3 0 0 6.3 -6.3 0z" fill="#d8145a"/><path d="M-6.3 0L0 -6.3 6.300 0" fill="none" stroke="#5c9a9a" stroke-width="2.2"/><path d="M-6.3 0L0 6.3 6.300 0" fill="none" stroke="#dcfbfb" stroke-width="2.2"/></svg>
<span class="m" style="left:970px;top:190.16px;">Min</span>
<svg style="left:950.5px;top:217.5px" width="16" height="16" viewBox="-8 -8 16 16"><path d="M0 -6.3L6.3 0 0 6.3 -6.3 0z" fill="#9ddcdc"/><path d="M-6.3 0L0 -6.3 6.300 0" fill="none" stroke="#dcfbfb" stroke-width="2.2"/><path d="M-6.3 0L0 6.3 6.300 0" fill="none" stroke="#5c9a9a" stroke-width="2.2"/></svg>
<span class="m" style="left:970px;top:217.16px;">Max</span>
<div style="left:945px;top:239px;width:103px;height:150px;background:#9ddcdc;border:1px solid #000;border-width:1px 1px 1px 2px"></div>
<div class="ri" style="left:949px;top:241px;width:80px;height:113px;"></div>
<div style="left:951px;top:245px;width:72px;height:15px;background:#000"></div>
<span class="m" style="left:951px;top:244.16px;color:#fff">Spacing</span>
<div style="left:1032px;top:241px;width:15px;height:113px;background:#9ddcdc;border:2px solid;border-color:#5c9a9a #dcfbfb #dcfbfb #5c9a9a"></div>
<svg style="left:1034px;top:243px" width="11" height="12"><path d="M5.5 1L10 10 H1z" fill="#9ddcdc" stroke="#5c9a9a" stroke-width="1.5"/><path d="M5.5 1L1 10" stroke="#dcfbfb" stroke-width="1.5"/></svg>
<svg style="left:1034px;top:340px" width="11" height="12"><path d="M1 1H10L5.5 10z" fill="#9ddcdc" stroke="#dcfbfb" stroke-width="1.5"/><path d="M5.5 10L10 1" stroke="#5c9a9a" stroke-width="1.5"/></svg>
<div style="left:1034px;top:255px;width:11px;height:83px;background:#9ddcdc;border:1px solid;border-color:#dcfbfb #5c9a9a #5c9a9a #dcfbfb"></div>
<div style="left:948px;top:355px;width:99px;height:32px;background:#9ddcdc"></div>
<div class="ro" style="left:949px;top:358px;width:29px;height:28px;"><div style="left:1.5px;top:1px;width:22px;height:22px;border:1px solid #000"></div><span class="s" style="left:2.5px;top:-3.12px;font-size:11.5px;letter-spacing:-0.3px;-webkit-text-stroke:0.2px #000">DEL</span><div style="left:9px;top:13px;width:7px;height:7px;border-radius:50%;background:#ff1818;border:1px solid #333"></div></div>
<div class="ro" style="left:983px;top:358px;width:29px;height:28px;"><div style="left:1.5px;top:1px;width:22px;height:22px;border:1px solid #000"></div><span class="s" style="left:2.5px;top:-3.12px;font-size:11.5px;letter-spacing:-0.3px;-webkit-text-stroke:0.2px #000">REF</span><div style="left:9px;top:13px;width:7px;height:7px;border-radius:50%;background:#18e018;border:1px solid #333"></div></div>
<div style="left:1048px;top:102px;width:358px;height:288px;background:#5c8c8a;border:solid #dcfbfb;border-width:0 2px 2px 0"></div>
<div style="left:1050px;top:104px;width:354px;height:221px;background:#9ddcdc;border:1px solid #000;border-left-width:2px"></div>
<div style="left:1097px;top:107px;width:259px;height:22px;background:#baffff;border:1px solid #000;box-shadow:2px 2px 0 #6c9c9c"></div>
<span class="mi" style="left:1101px;top:111.96px;">Size(Spacing) / Min(Spacing)</span>
<div style="left:1056px;top:191px;width:49px;height:79px;background:#ff1c1c;border:1px solid #000"></div>
<div style="left:1056px;top:273px;width:49px;height:29px;background:#ff1c1c;border:1px solid #000;overflow:hidden"><span class="m" style="left:5px;top:1.66px;color:#280000">7.3-</span><span class="m" style="left:5px;top:15.16px;color:#280000"> 7.4</span></div>
<span class="m" style="left:1058.5px;top:174.16px;color:#e01c1c">7.312</span>
<div style="left:1104px;top:164px;width:49px;height:106px;background:#ff1c1c;border:1px solid #000"></div>
<div style="left:1104px;top:273px;width:49px;height:29px;background:#ff1c1c;border:1px solid #000;overflow:hidden"><span class="m" style="left:5px;top:1.66px;color:#280000">9.8-</span><span class="m" style="left:5px;top:15.16px;color:#280000"> 9.9</span></div>
<span class="m" style="left:1106.5px;top:147.16px;color:#000">9.833</span>
<div style="left:1152px;top:162px;width:49px;height:108px;background:#ffff20;border:1px solid #000"></div>
<div style="left:1152px;top:273px;width:49px;height:29px;background:#ffff20;border:1px solid #000;overflow:hidden"><span class="m" style="left:1px;top:1.66px;color:#280000">10-</span><span class="m" style="left:1px;top:15.16px;color:#280000"> 10.1</span></div>
<span class="m" style="left:1150px;top:145.16px;color:#000">10.005</span>
<div style="left:1200px;top:160px;width:49px;height:110px;background:#ffff20;border:1px solid #000"></div>
<div style="left:1200px;top:273px;width:49px;height:29px;background:#ffff20;border:1px solid #000;overflow:hidden"><span class="m" style="left:1px;top:1.66px;color:#280000">10.1-</span><span class="m" style="left:1px;top:15.16px;color:#280000"> 10.2</span></div>
<span class="m" style="left:1198px;top:143.16px;color:#000">10.142</span>
<div style="left:1248px;top:158px;width:49px;height:112px;background:#ffff20;border:1px solid #000"></div>
<div style="left:1248px;top:273px;width:49px;height:29px;background:#ffff20;border:1px solid #000;overflow:hidden"><span class="m" style="left:1px;top:1.66px;color:#280000"></span><span class="m" style="left:1px;top:15.16px;color:#280000"></span></div>
<span class="m" style="left:1246px;top:141.16px;color:#000">10.352</span>
<div style="left:1296px;top:147px;width:49px;height:123px;background:#ffff20;border:1px solid #000"></div>
<div style="left:1296px;top:273px;width:49px;height:29px;background:#ffff20;border:1px solid #000;overflow:hidden"><span class="m" style="left:1px;top:1.66px;color:#280000"></span><span class="m" style="left:1px;top:15.16px;color:#280000"></span></div>
<span class="m" style="left:1294px;top:130.16px;color:#000">11.358</span>
<div style="left:1344px;top:147px;width:49px;height:123px;background:#ffff20;border:1px solid #000"></div>
<div style="left:1344px;top:273px;width:49px;height:29px;background:#ffff20;border:1px solid #000;overflow:hidden"><span class="m" style="left:1px;top:1.66px;color:#280000"></span><span class="m" style="left:1px;top:15.16px;color:#280000"></span></div>
<span class="m" style="left:1342px;top:130.16px;color:#000">11.407</span>
<div style="left:1051px;top:269px;width:352px;height:4px;background:#000"></div>
<div style="left:1051px;top:310px;width:352px;height:14px;background:#9ddcdc;border:2px solid;border-color:#5c9a9a #dcfbfb #dcfbfb #5c9a9a"></div>
<svg style="left:1053px;top:312px" width="14" height="10"><path d="M1 5L12 1V9z" fill="#9ddcdc" stroke="#5c9a9a" stroke-width="1.5"/><path d="M1 5L12 1" stroke="#dcfbfb" stroke-width="1.5"/></svg>
<div style="left:1067px;top:312px;width:340px;height:10px;background:#9ddcdc;border:1px solid;border-color:#dcfbfb #5c9a9a #5c9a9a #dcfbfb"></div>
<div style="left:1050px;top:324px;width:354px;height:64px;background:#9ddcdc;border:2px solid #000;border-width:1px 1px 2px 2px"></div>
<div class="ri" style="left:1052px;top:326px;width:75px;height:61px;"></div>
<div style="left:1057px;top:330px;width:63px;height:15px;background:#000"></div>
<span class="m" style="left:1057px;top:329.16px;color:#fff">Spacing</span>
<span class="m" style="left:1057px;top:347.16px;">Hole</span>
<span class="m" style="left:1057px;top:365.16px;">Circuit</span>
<div style="left:1129px;top:326px;width:15px;height:61px;background:#9ddcdc;border:2px solid;border-color:#5c9a9a #dcfbfb #dcfbfb #5c9a9a"></div>
<svg style="left:1131px;top:328px" width="11" height="12"><path d="M5.5 1L10 10 H1z" fill="#9ddcdc" stroke="#5c9a9a" stroke-width="1.5"/><path d="M5.5 1L1 10" stroke="#dcfbfb" stroke-width="1.5"/></svg>
<svg style="left:1131px;top:373px" width="11" height="12"><path d="M1 1H10L5.5 10z" fill="#9ddcdc" stroke="#dcfbfb" stroke-width="1.5"/><path d="M5.5 10L10 1" stroke="#5c9a9a" stroke-width="1.5"/></svg>
<div style="left:1131px;top:340px;width:11px;height:31px;background:#9ddcdc;border:1px solid;border-color:#dcfbfb #5c9a9a #5c9a9a #dcfbfb"></div>
<div style="left:1145px;top:326px;width:258px;height:61px;border:2px solid;border-color:#dcfbfb #5c9a9a #5c9a9a #dcfbfb"></div>
<span class="m" style="left:1227px;top:327.66px;">Res</span>
<span class="m" style="left:1151px;top:350.16px;">0.1</span>
<div style="left:1148px;top:369px;width:256px;height:13px;background:#74b4b4;border:2px solid;border-color:#5c9a9a #dcfbfb #dcfbfb #5c9a9a"></div>
<div style="left:1150px;top:371px;width:29px;height:9px;background:#9ddcdc;border:1px solid;border-color:#dcfbfb #5c9a9a #5c9a9a #dcfbfb"><div style="left:13px;top:0;width:2px;height:7px;border-left:1px solid #5c9a9a;border-right:1px solid #dcfbfb"></div></div>
<div style="left:945px;top:399px;width:458px;height:163px;background:#55cdb0;border:solid #14503f;border-width:2px 1px 1px 2px"></div>
<div style="left:1053px;top:420px;width:241px;height:122px;background:#9ddcdc;border:2px solid #000"></div>
<div class="ro" style="left:947px;top:567px;width:30px;height:36px;"><div style="left:2px;top:5px;width:22px;height:22px;border:1px solid #000"></div><span class="s" style="left:3px;top:0.88px;font-size:11.5px;letter-spacing:-0.3px;-webkit-text-stroke:0.2px #000">DEL</span><div style="left:9.5px;top:17px;width:7px;height:7px;border-radius:50%;background:#ff1818;border:1px solid #333"></div></div>
<div class="ro" style="left:982px;top:567px;width:30px;height:36px;"><div style="left:2px;top:5px;width:22px;height:22px;border:1px solid #000"></div><span class="s" style="left:3px;top:0.88px;font-size:11.5px;letter-spacing:-0.3px;-webkit-text-stroke:0.2px #000">REF</span><div style="left:9.5px;top:17px;width:7px;height:7px;border-radius:50%;background:#18e018;border:1px solid #333"></div></div>
<div style="left:1013px;top:564px;width:307px;height:42px;background:#9ddcdc;border:1px solid #000"></div>
<span class="m" style="left:1017px;top:576.16px;">452 measurements for 6 layers</span>
<div class="ro" style="left:1322px;top:566px;width:38px;height:38px;"><div style="left:2px;top:2px;right:2px;bottom:2px;border:1px solid #000"></div><svg style="left:2px;top:2px" width="30" height="30"><rect x="4" y="3.5" width="12" height="12" fill="#e01840" stroke="#1010d0" stroke-width="2"/><path d="M6 6v4h2v-2h3v2h3v-4" fill="#c8c8ff" opacity="0.8"/><rect x="19.5" y="19.5" width="7" height="7" fill="#9ddcdc" stroke="#1010d0" stroke-width="2"/><path d="M18 7.5h5.5v6" stroke="#000" fill="none"/><path d="M21 12.5h5l-2.5 4z" fill="#000"/></svg></div>
<div class="ro" style="left:1364px;top:566px;width:38px;height:38px;"><div style="left:2px;top:2px;right:2px;bottom:2px;border:1px solid #000"></div><svg style="left:2px;top:2px" width="30" height="30"><rect x="4" y="3.5" width="12" height="12" fill="#e01840" stroke="#1010d0" stroke-width="2"/><path d="M6 6v4h2v-2h3v2h3v-4" fill="#c8c8ff" opacity="0.8"/><rect x="19.5" y="19.5" width="7" height="7" fill="#9ddcdc" stroke="#1010d0" stroke-width="2"/><path d="M19 23.500h-9.500v-4" stroke="#000" fill="none"/><path d="M7 20.500h5l-2.500-4z" fill="#000"/></svg></div>
<div class="ro" style="left:943px;top:612px;width:463px;height:23px;"></div>
<span class="m" style="left:1152px;top:615.16px;">Close</span>
<div class="win" style="left:1252px;top:242px;width:192px;height:247px;"><div class="w2"></div></div>
<div class="tb" style="left:1256px;top:246px;width:184px;height:18px;"><svg style="left:2px;top:1px" width="17" height="16" viewBox="0 0 17 16"><rect x="1" y="3" width="14" height="11.500" fill="#fffff4"/><rect x="0.500" y="1.300" width="10" height="2" fill="#10108a"/><rect x="10.500" y="1.300" width="4.500" height="2" fill="#7880a8"/><path d="M15.500 1.500V15H0.500" stroke="#181818" fill="none"/><path d="M0.500 3V14.500" stroke="#a0a0a0" fill="none"/><path d="M3.500 6L11.500 13M11.500 6L3.500 13" stroke="#c8cc18" stroke-width="2.200"/><path d="M4.500 7.500L10 12" stroke="#eef040" stroke-width="0.800"/></svg><span class="t" style="left:19.5px;top:-0.83px;font-size:11.5px;color:#dedad2;letter-spacing:0.15px">Measure Popup</span></div>
<div class="xb" style="left:1422px;top:248px;width:16px;height:14px;"><svg style="left:3px;top:2px" width="9" height="8"><path d="M0.5 0.5L7.5 7.5M7.5 0.5L0.5 7.5" stroke="#000" stroke-width="1.6"/></svg></div>
<div style="left:1256px;top:265px;width:184px;height:220px;background:#55cdb0;border:solid #000;border-width:1px 0 0 1px;box-shadow:inset 2px 2px 0 #98ecd8"></div>
<div class="xb" style="left:1422px;top:248px;width:16px;height:14px;"><svg style="left:3px;top:2px" width="9" height="8"><path d="M0.5 0.5L7.5 7.5M7.5 0.5L0.5 7.5" stroke="#000" stroke-width="1.6"/></svg></div>
<div style="left:1256px;top:265px;width:183px;height:161px;background:#9ddcdc;border:1px solid #000"></div>
<span class="m" style="left:1293px;top:264.66px;">Measure Mode</span>
<div style="left:1256px;top:280px;width:183px;height:30px;border:2px solid #000;border-right-width:1px;border-left-width:1px"></div>
<svg style="left:1261.5px;top:286.5px" width="16" height="16" viewBox="-8 -8 16 16"><path d="M0 -6.3L6.3 0 0 6.3 -6.3 0z" fill="#9ddcdc"/><path d="M-6.3 0L0 -6.3 6.300 0" fill="none" stroke="#dcfbfb" stroke-width="2.2"/><path d="M-6.3 0L0 6.3 6.300 0" fill="none" stroke="#5c9a9a" stroke-width="2.2"/></svg>
<span class="m" style="left:1281px;top:286.16px;">Between Points</span>
<div style="left:1256px;top:309px;width:183px;height:30px;border:2px solid #000;border-right-width:1px;border-left-width:1px"></div>
<svg style="left:1261.5px;top:315.5px" width="16" height="16" viewBox="-8 -8 16 16"><path d="M0 -6.3L6.3 0 0 6.3 -6.3 0z" fill="#d8145a"/><path d="M-6.3 0L0 -6.3 6.300 0" fill="none" stroke="#5c9a9a" stroke-width="2.2"/><path d="M-6.3 0L0 6.3 6.300 0" fill="none" stroke="#dcfbfb" stroke-width="2.2"/></svg>
<span class="m" style="left:1281px;top:315.16px;">Between Contours</span>
<div style="left:1256px;top:338px;width:183px;height:30px;border:2px solid #000;border-right-width:1px;border-left-width:1px"></div>
<svg style="left:1261.5px;top:344.5px" width="16" height="16" viewBox="-8 -8 16 16"><path d="M0 -6.3L6.3 0 0 6.3 -6.3 0z" fill="#9ddcdc"/><path d="M-6.3 0L0 -6.3 6.300 0" fill="none" stroke="#dcfbfb" stroke-width="2.2"/><path d="M-6.3 0L0 6.3 6.300 0" fill="none" stroke="#5c9a9a" stroke-width="2.2"/></svg>
<span class="m" style="left:1281px;top:344.16px;">Between Nets</span>
<div style="left:1256px;top:367px;width:183px;height:30px;border:2px solid #000;border-right-width:1px;border-left-width:1px"></div>
<svg style="left:1261.5px;top:373.5px" width="16" height="16" viewBox="-8 -8 16 16"><path d="M0 -6.3L6.3 0 0 6.3 -6.3 0z" fill="#9ddcdc"/><path d="M-6.3 0L0 -6.3 6.300 0" fill="none" stroke="#dcfbfb" stroke-width="2.2"/><path d="M-6.3 0L0 6.3 6.300 0" fill="none" stroke="#5c9a9a" stroke-width="2.2"/></svg>
<span class="m" style="left:1281px;top:373.16px;">Annular Ring</span>
<div style="left:1256px;top:396px;width:183px;height:30px;border:2px solid #000;border-right-width:1px;border-left-width:1px"></div>
<svg style="left:1261.5px;top:402.5px" width="16" height="16" viewBox="-8 -8 16 16"><path d="M0 -6.3L6.3 0 0 6.3 -6.3 0z" fill="#9ddcdc"/><path d="M-6.3 0L0 -6.3 6.300 0" fill="none" stroke="#dcfbfb" stroke-width="2.2"/><path d="M-6.3 0L0 6.3 6.300 0" fill="none" stroke="#5c9a9a" stroke-width="2.2"/></svg>
<span class="m" style="left:1281px;top:402.16px;">Between Midpoints</span>
<div class="ro" style="left:1258px;top:459px;width:180px;height:25px;"></div>
<span class="m" style="left:1325px;top:463.16px;">Close</span>
<div class="win" style="left:75px;top:566px;width:503px;height:291px;"><div class="w2"></div></div>
<div class="tb" style="left:79px;top:570px;width:495px;height:18px;"><svg style="left:2px;top:1px" width="17" height="16" viewBox="0 0 17 16"><rect x="1" y="3" width="14" height="11.500" fill="#fffff4"/><rect x="0.500" y="1.300" width="10" height="2" fill="#10108a"/><rect x="10.500" y="1.300" width="4.500" height="2" fill="#7880a8"/><path d="M15.500 1.500V15H0.500" stroke="#181818" fill="none"/><path d="M0.500 3V14.500" stroke="#a0a0a0" fill="none"/><path d="M3.500 6L11.500 13M11.500 6L3.500 13" stroke="#c8cc18" stroke-width="2.200"/><path d="M4.500 7.500L10 12" stroke="#eef040" stroke-width="0.800"/></svg><span class="t" style="left:19.5px;top:-0.83px;font-size:11.5px;color:#dedad2;letter-spacing:0.15px">Results viewer</span></div>
<div class="xb" style="left:556px;top:572px;width:16px;height:14px;"><svg style="left:3px;top:2px" width="9" height="8"><path d="M0.5 0.5L7.5 7.5M7.5 0.5L0.5 7.5" stroke="#000" stroke-width="1.6"/></svg></div>
<div style="left:79px;top:589px;width:495px;height:264px;background:#55cdb0;border:solid #000;border-width:1px 0 0 1px;box-shadow:inset 2px 2px 0 #98ecd8"></div>
<div style="left:79px;top:589px;width:496px;height:262px;background:#55cdb0;border:1px solid #000;border-bottom:0;border-right-width:2px"></div>
<div style="left:80px;top:590px;width:492px;height:27px;background:#55cdb0;border:solid #98ecd8;border-width:0 2px 2px 0"><div style="left:0;top:0;right:0;bottom:0;border:solid;border-width:3px 2px 2px 3px;border-color:#98ecd8 #2c8670 #2c8670 #98ecd8"></div></div>
<span class="s" style="left:261.5px;top:593.35px;font-size:15.5px;">Signal Layer Checks</span>
<div style="left:80px;top:617px;width:171px;height:31px;background:#000"></div>
<div style="left:251px;top:617px;width:322px;height:34px;background:#000"></div>
<div style="left:80px;top:620px;width:49px;height:27px;background:#55cdb0"></div>
<div class="ro" style="left:83px;top:622px;width:45px;height:23px;"></div>
<span class="mn" style="left:87.5px;top:624.66px;">None</span>
<div style="left:131px;top:620px;width:76px;height:27px;background:#9ddcdc"></div>
<span class="mi" style="left:142px;top:624.66px;">Layers</span>
<div style="left:209px;top:620px;width:39px;height:27px;background:#55cdb0"></div>
<div class="ro" style="left:211px;top:622px;width:35px;height:23px;"></div>
<span class="mn" style="left:215px;top:624.26px;">All</span>
<div style="left:251px;top:619px;width:322px;height:31px;background:#9ddcdc"></div>
<div style="left:251px;top:619px;width:208px;height:30px;background:#55cdb0"></div>
<div class="ro" style="left:253px;top:621px;width:205px;height:27px;"></div>
<span class="mi" style="left:288px;top:625.16px;">Categories (18)</span>
<span class="m" style="left:460px;top:625.46px;">Meas:</span>
<div class="ro" style="left:511px;top:621px;width:60px;height:27px;"></div>
<span class="m" style="left:517px;top:625.46px;">All</span>
<div style="left:552px;top:631px;width:12px;height:7px;border:1px solid;border-color:#dcfbfb #5c9a9a #5c9a9a #dcfbfb;background:#9ddcdc;box-shadow:0 1px 0 #5c9a9a"></div>
<div style="left:80px;top:648px;width:169px;height:203px;background:#55cdb0"></div>
<div class="ai" style="left:80px;top:648px;width:150px;height:203px;border-bottom:0"></div>
<div style="left:234px;top:648px;width:15px;height:222px;background:#55cdb0;border:2px solid;border-color:#2c8670 #98ecd8 #98ecd8 #2c8670"></div>
<svg style="left:236px;top:650px" width="11" height="12"><path d="M5.5 1L10 10 H1z" fill="#55cdb0" stroke="#2c8670" stroke-width="1.5"/><path d="M5.5 1L1 10" stroke="#98ecd8" stroke-width="1.5"/></svg>
<svg style="left:236px;top:856px" width="11" height="12"><path d="M1 1H10L5.5 10z" fill="#55cdb0" stroke="#98ecd8" stroke-width="1.5"/><path d="M5.5 10L10 1" stroke="#2c8670" stroke-width="1.5"/></svg>
<div style="left:236px;top:662px;width:11px;height:192px;background:#55cdb0;border:1px solid;border-color:#98ecd8 #2c8670 #2c8670 #98ecd8"></div>
<div style="left:249px;top:648px;width:2px;height:203px;background:#000"></div>
<span class="m" style="left:85px;top:652.16px;">cs</span>
<div style="left:85px;top:671px;width:140px;height:14.6px;background:#000"></div>
<span class="m" style="left:85px;top:670.16px;color:#55cdb0">sig2t</span>
<div style="left:85px;top:689px;width:140px;height:14.6px;background:#000"></div>
<span class="m" style="left:85px;top:688.16px;color:#55cdb0">sig3b</span>
<div style="left:85px;top:707px;width:140px;height:14.6px;background:#000"></div>
<span class="m" style="left:85px;top:706.16px;color:#55cdb0">sig4t</span>
<div style="left:85px;top:725px;width:140px;height:14.6px;background:#000"></div>
<span class="m" style="left:85px;top:724.16px;color:#55cdb0">sig5b</span>
<div style="left:85px;top:743px;width:140px;height:14.6px;background:#000"></div>
<span class="m" style="left:85px;top:742.16px;color:#55cdb0">sig6t</span>
<div style="left:85px;top:761px;width:140px;height:14.6px;background:#000"></div>
<span class="m" style="left:85px;top:760.16px;color:#55cdb0">sig7b</span>
<span class="m" style="left:85px;top:778.16px;">ss</span>
<div style="left:251px;top:651px;width:322px;height:200px;background:#55cdb0"></div>
<div class="ai" style="left:251px;top:651px;width:305px;height:200px;border-bottom:0"></div>
<div style="left:558px;top:651px;width:15px;height:220px;background:#55cdb0;border:2px solid;border-color:#2c8670 #98ecd8 #98ecd8 #2c8670"></div>
<svg style="left:560px;top:653px" width="11" height="12"><path d="M5.5 1L10 10 H1z" fill="#55cdb0" stroke="#2c8670" stroke-width="1.5"/><path d="M5.5 1L1 10" stroke="#98ecd8" stroke-width="1.5"/></svg>
<svg style="left:560px;top:857px" width="11" height="12"><path d="M1 1H10L5.5 10z" fill="#55cdb0" stroke="#98ecd8" stroke-width="1.5"/><path d="M5.5 10L10 1" stroke="#2c8670" stroke-width="1.5"/></svg>
<div style="left:560px;top:665px;width:11px;height:190px;background:#55cdb0;border:1px solid;border-color:#98ecd8 #2c8670 #2c8670 #98ecd8"></div>
<span class="m" style="left:256px;top:653.66px;">Pad to pad (2)</span>
<span class="m" style="left:256px;top:671.66px;">Pad to circuit (176)</span>
<span class="m" style="left:256px;top:689.66px;">Circuit to circuit (862)</span>
<span class="m" style="left:256px;top:707.66px;">Same Net Spacing (60)</span>
<span class="m" style="left:256px;top:725.66px;">NPTH to pad (2)</span>
<div style="left:256px;top:745px;width:293px;height:15px;background:#000"></div>
<span class="m" style="left:256px;top:743.66px;color:#55cdb0">NPTH to circuit (452)</span>
<span class="m" style="left:256px;top:761.66px;">PTH to Copper (12338)</span>
<span class="m" style="left:256px;top:779.66px;">PTH (Comp) Annular ring (66)</span>
<span class="m" style="left:256px;top:797.66px;">VIA Annular ring (626)</span>
<span class="m" style="left:256px;top:815.66px;">PTH Registration (4)</span>
<span class="m" style="left:256px;top:833.66px;">Spacing length (82)</span>
<div style="left:75px;top:847px;width:503px;height:4px;background:#d4d0c8;border-top:1px solid #fff"></div>
</div>
</body></html>
